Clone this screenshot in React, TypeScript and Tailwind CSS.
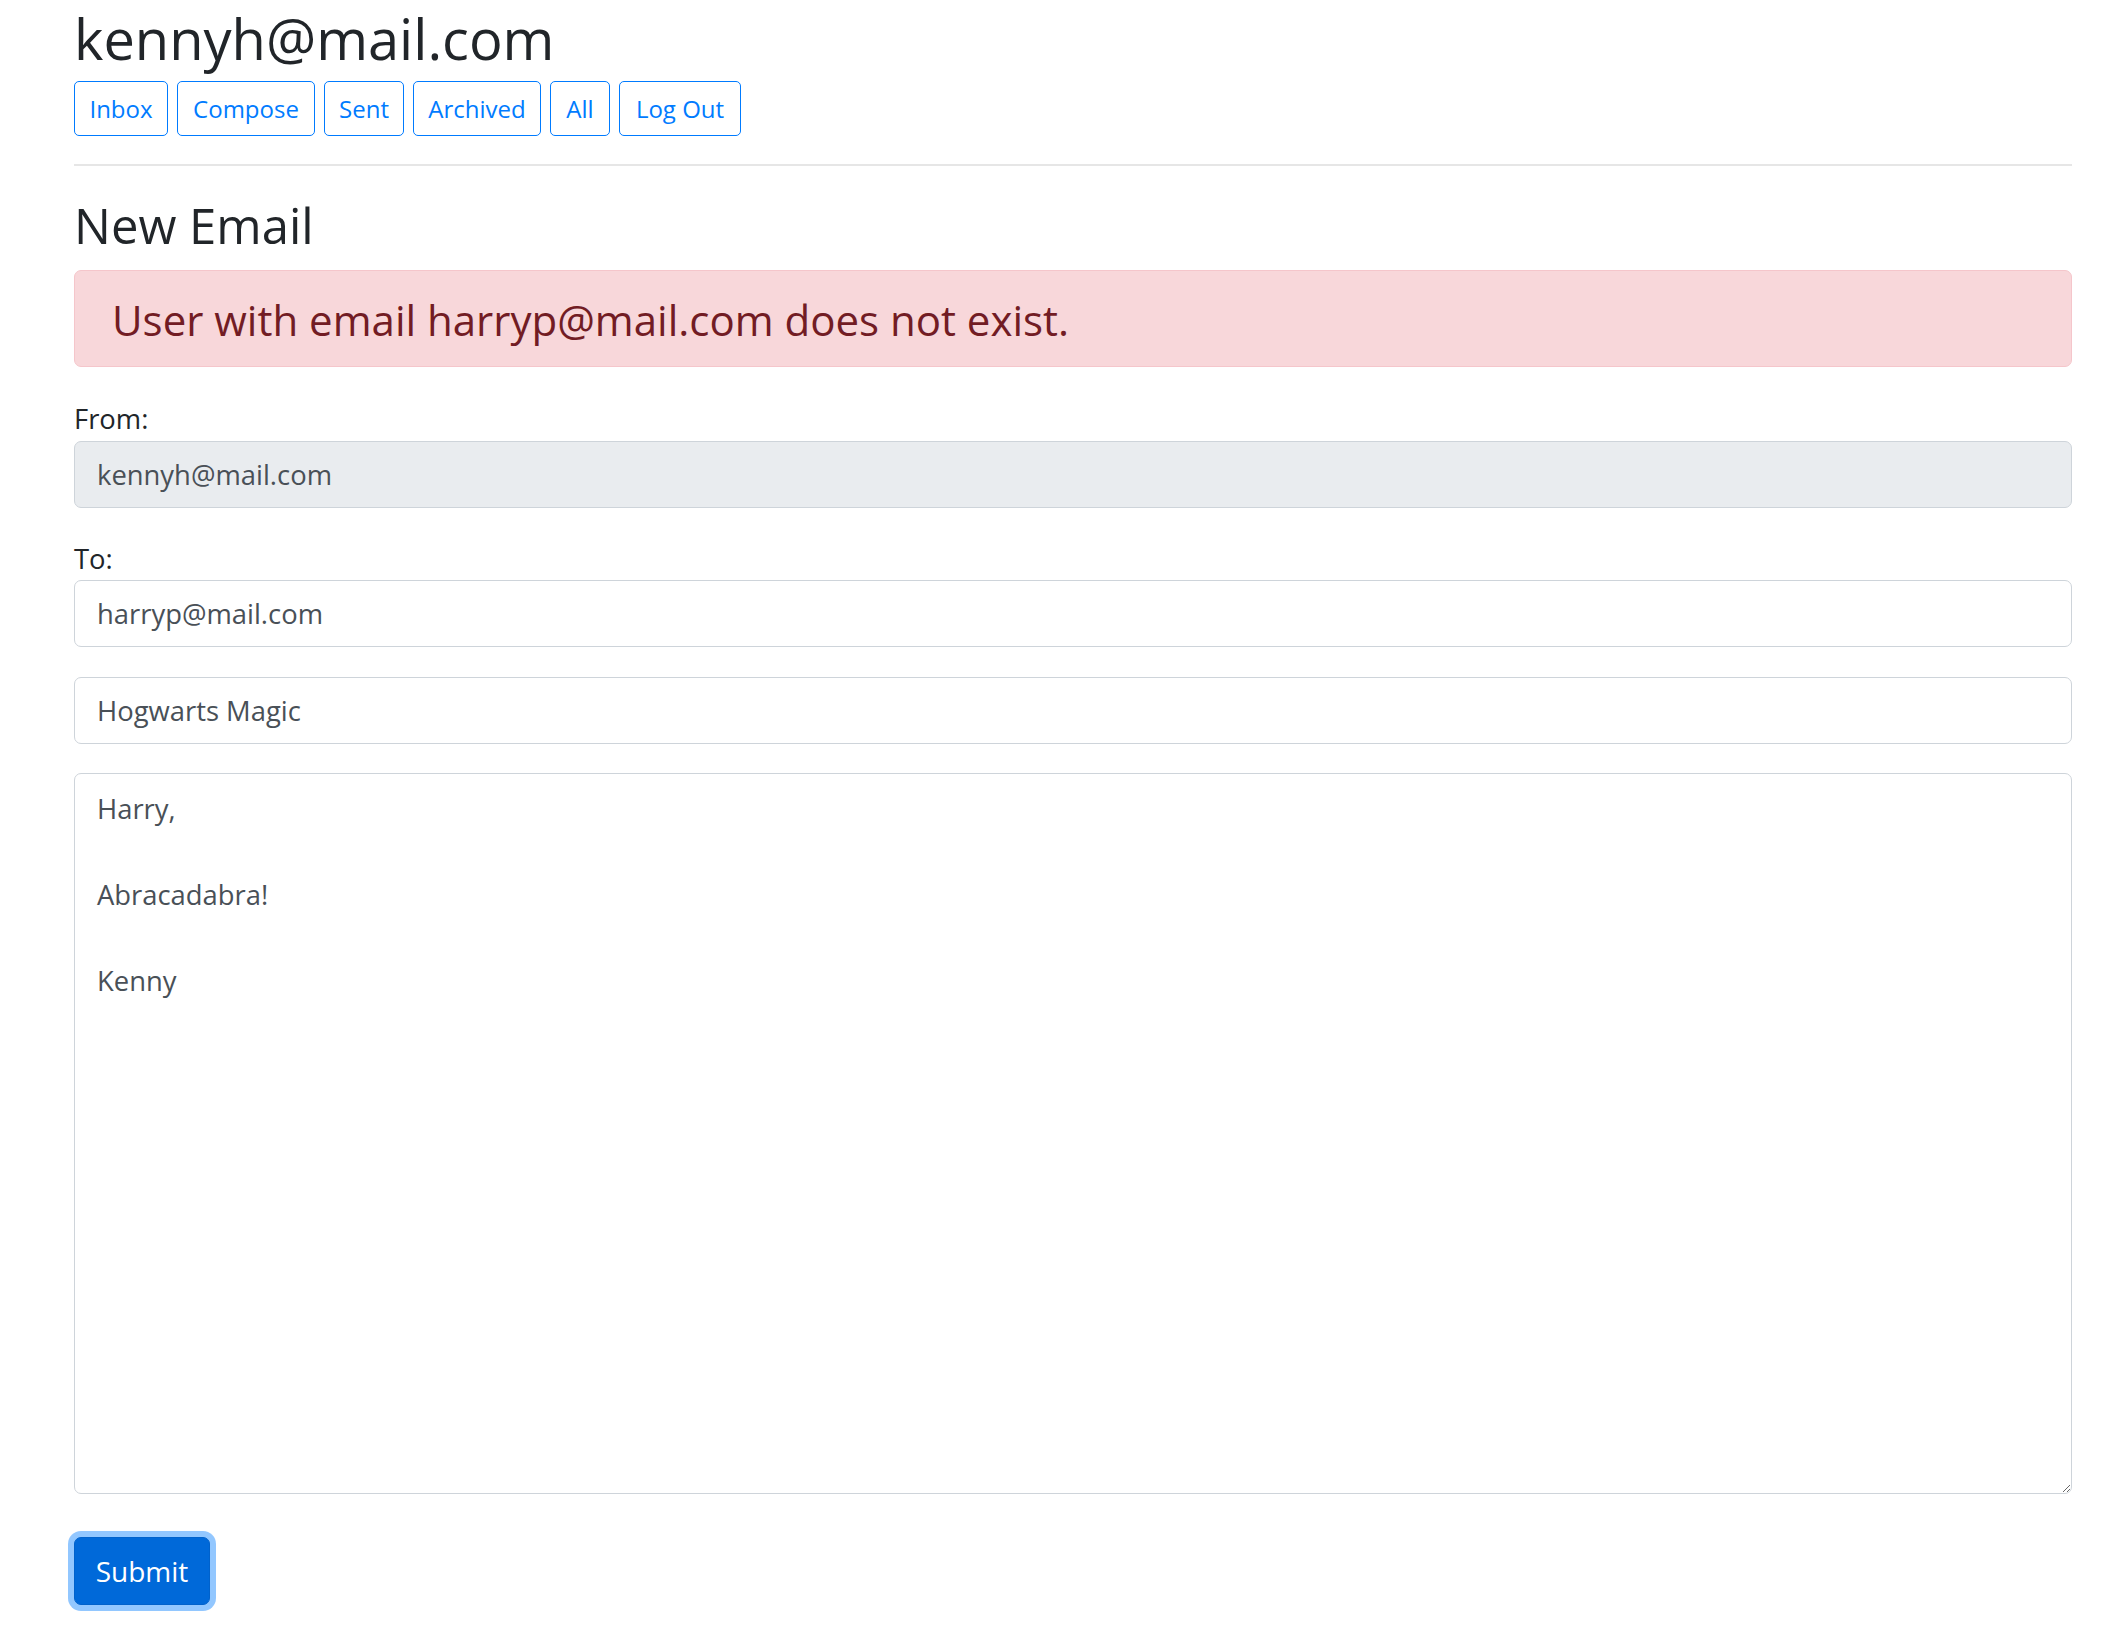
import React from "react";

const navButtons: { label: string; w: string }[] = [
  { label: "Inbox", w: "w-[94px]" },
  { label: "Compose", w: "w-[138px]" },
  { label: "Sent", w: "w-[80px]" },
  { label: "Archived", w: "w-[128px]" },
  { label: "All", w: "w-[60px]" },
  { label: "Log Out", w: "w-[122px]" },
];

export default function App() {
  return (
    <div className="min-h-[1625px] bg-white pl-[74px] pr-[44px] font-['Open_Sans','Noto_Sans',sans-serif] text-[#212529]">
      <h2 className="text-[56px] leading-[77px] font-medium mb-[4px] whitespace-nowrap">
        kennyh@mail.com
      </h2>
      <div className="flex gap-[9px]">
        {navButtons.map((b) => (
          <button
            key={b.label}
            className={`${b.w} h-[55px] flex items-center justify-center rounded-[5px] border border-[#007bff] text-[#007bff] text-[24px] leading-[37px] bg-white`}
          >
            {b.label}
          </button>
        ))}
      </div>
      <div className="mt-[28px] h-[2px] bg-[#e6e6e6]" />
      <h3 className="mt-[30px] h-[59px] text-[49px] leading-[59px] font-medium">New Email</h3>
      <div className="mt-[15px] h-[97px] rounded-[7px] border border-[#f5c6cb] bg-[#f8d7da] px-[37px] flex items-center">
        <h4 className="mt-[2px] text-[42px] leading-[50px] font-medium text-[#721c24]">
          User with email harryp@mail.com does not exist.
        </h4>
      </div>
      <div className="mt-[31px] h-[42px] text-[27.4px] leading-[42px]">From:</div>
      <input
        readOnly
        value="kennyh@mail.com"
        className="mt-[1px] block w-full h-[67px] rounded-[7px] border border-[#ced4da] bg-[#e9ecef] px-[22px] text-[27.4px] leading-[42px] text-[#495057] outline-none"
      />
      <div className="mt-[30px] h-[42px] text-[27.4px] leading-[42px]">To:</div>
      <input
        readOnly
        value="harryp@mail.com"
        className="block w-full h-[67px] rounded-[7px] border border-[#ced4da] bg-white px-[22px] text-[27.4px] leading-[42px] text-[#495057] outline-none"
      />
      <input
        readOnly
        value="Hogwarts Magic"
        className="mt-[30px] block w-full h-[67px] rounded-[7px] border border-[#ced4da] bg-white px-[22px] text-[27.4px] leading-[42px] text-[#495057] outline-none"
      />
      <textarea
        readOnly
        defaultValue={"Harry,\n\nAbracadabra!\n\nKenny"}
        className="mt-[29px] block w-full h-[721px] rounded-[7px] border border-[#ced4da] bg-white px-[22px] pt-[13px] pb-[10px] text-[27.4px] leading-[43px] text-[#495057] outline-none"
      />
      <button className="mt-[43px] w-[136px] h-[68px] rounded-[7px] border border-[#0062cc] bg-[#0069d9] text-white text-[28px] leading-[42px] shadow-[0_0_0_6px_rgba(38,143,255,0.5)]">
        Submit
      </button>
    </div>
  );
}
